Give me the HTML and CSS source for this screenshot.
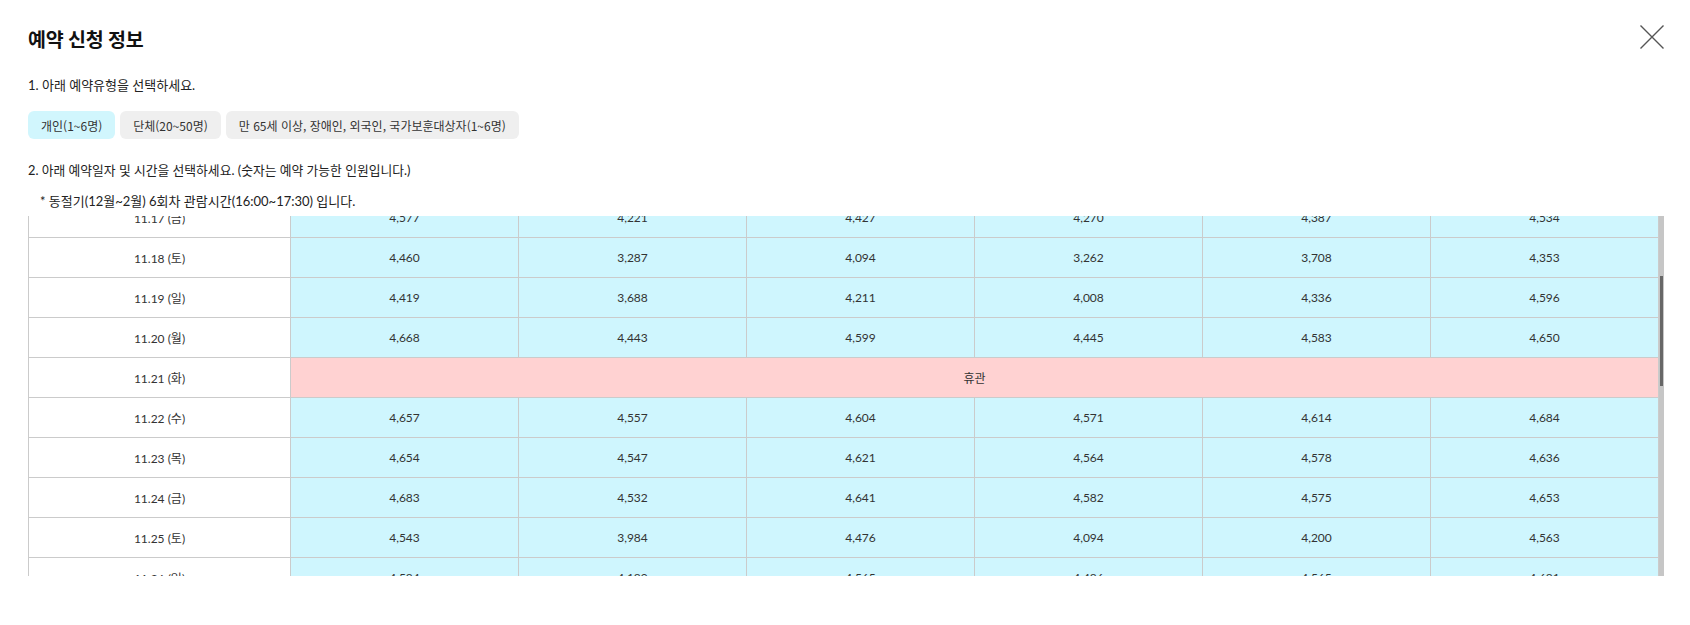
FILE: index.html
```html
<!DOCTYPE html>
<html lang="ko">
<head>
<meta charset="utf-8">
<title>예약 신청 정보</title>
<link rel="stylesheet" href="styles.css">
</head>
<body>
<div class="modal">
  <h2 class="title">예약 신청 정보</h2>
  <button class="close" aria-label="닫기">
    <svg width="24" height="24" viewBox="0 0 24 24"><path d="M0.5 0.5 L23.5 23.5 M23.5 0.5 L0.5 23.5" stroke="#555" stroke-width="1.4" fill="none"/></svg>
  </button>
  <p class="step step1">1. 아래 예약유형을 선택하세요.</p>
  <div class="types">
    <button class="type active">개인(1~6명)</button>
    <button class="type">단체(20~50명)</button>
    <button class="type">만 65세 이상, 장애인, 외국인, 국가보훈대상자(1~6명)</button>
  </div>
  <p class="step step2">2. 아래 예약일자 및 시간을 선택하세요. (숫자는 예약 가능한 인원입니다.)</p>
  <p class="note">* 동절기(12월~2월) 6회차 관람시간(16:00~17:30) 입니다.</p>
  <div class="scroll-wrap">
    <div class="scroll" id="scroll">
      <table class="sched">
        <colgroup><col class="c-date"><col><col><col><col><col><col></colgroup>
        <thead>
          <tr><th>날짜</th><th>1회차<br>(09:30~11:00)</th><th>2회차<br>(10:30~12:00)</th><th>3회차<br>(12:00~13:30)</th><th>4회차<br>(13:30~15:00)</th><th>5회차<br>(14:30~16:00)</th><th>6회차<br>(16:00~17:30)</th></tr>
        </thead>
        <tbody>
          <tr><td class="d">11.14 (화)</td><td class="closed" colspan="6">휴관</td></tr>
          <tr><td class="d">11.15 (수)</td><td>4,612</td><td>4,498</td><td>4,587</td><td>4,533</td><td>4,601</td><td>4,672</td></tr>
          <tr><td class="d">11.16 (목)</td><td>4,640</td><td>4,512</td><td>4,603</td><td>4,556</td><td>4,590</td><td>4,661</td></tr>
          <tr><td class="d">11.17 (금)</td><td>4,577</td><td>4,221</td><td>4,427</td><td>4,270</td><td>4,387</td><td>4,534</td></tr>
          <tr><td class="d">11.18 (토)</td><td>4,460</td><td>3,287</td><td>4,094</td><td>3,262</td><td>3,708</td><td>4,353</td></tr>
          <tr><td class="d">11.19 (일)</td><td>4,419</td><td>3,688</td><td>4,211</td><td>4,008</td><td>4,336</td><td>4,596</td></tr>
          <tr><td class="d">11.20 (월)</td><td>4,668</td><td>4,443</td><td>4,599</td><td>4,445</td><td>4,583</td><td>4,650</td></tr>
          <tr><td class="d">11.21 (화)</td><td class="closed" colspan="6">휴관</td></tr>
          <tr><td class="d">11.22 (수)</td><td>4,657</td><td>4,557</td><td>4,604</td><td>4,571</td><td>4,614</td><td>4,684</td></tr>
          <tr><td class="d">11.23 (목)</td><td>4,654</td><td>4,547</td><td>4,621</td><td>4,564</td><td>4,578</td><td>4,636</td></tr>
          <tr><td class="d">11.24 (금)</td><td>4,683</td><td>4,532</td><td>4,641</td><td>4,582</td><td>4,575</td><td>4,653</td></tr>
          <tr><td class="d">11.25 (토)</td><td>4,543</td><td>3,984</td><td>4,476</td><td>4,094</td><td>4,200</td><td>4,563</td></tr>
          <tr><td class="d">11.26 (일)</td><td>4,584</td><td>4,189</td><td>4,565</td><td>4,486</td><td>4,565</td><td>4,681</td></tr>
          <tr><td class="d">11.27 (월)</td><td>4,690</td><td>4,611</td><td>4,652</td><td>4,598</td><td>4,627</td><td>4,688</td></tr>
          <tr><td class="d">11.28 (화)</td><td class="closed" colspan="6">휴관</td></tr>
          <tr><td class="d">11.29 (수)</td><td>4,695</td><td>4,640</td><td>4,668</td><td>4,633</td><td>4,651</td><td>4,697</td></tr>
          <tr><td class="d">11.30 (목)</td><td>4,692</td><td>4,628</td><td>4,659</td><td>4,617</td><td>4,644</td><td>4,693</td></tr>
          <tr><td class="d">12.01 (금)</td><td>4,688</td><td>4,602</td><td>4,647</td><td>4,611</td><td>4,629</td><td>4,690</td></tr>
          <tr><td class="d">12.02 (토)</td><td>4,611</td><td>4,205</td><td>4,538</td><td>4,317</td><td>4,402</td><td>4,620</td></tr>
          <tr><td class="d">12.03 (일)</td><td>4,633</td><td>4,398</td><td>4,590</td><td>4,512</td><td>4,571</td><td>4,664</td></tr>
          <tr><td class="d">12.04 (월)</td><td>4,697</td><td>4,655</td><td>4,680</td><td>4,649</td><td>4,662</td><td>4,698</td></tr>
          <tr><td class="d">12.05 (화)</td><td class="closed" colspan="6">휴관</td></tr>
          <tr><td class="d">12.06 (수)</td><td>4,699</td><td>4,670</td><td>4,684</td><td>4,661</td><td>4,677</td><td>4,700</td></tr>
          <tr><td class="d">12.07 (목)</td><td>4,698</td><td>4,666</td><td>4,681</td><td>4,659</td><td>4,672</td><td>4,699</td></tr>
          <tr><td class="d">12.08 (금)</td><td>4,696</td><td>4,651</td><td>4,674</td><td>4,647</td><td>4,668</td><td>4,698</td></tr>
          <tr><td class="d">12.09 (토)</td><td>4,662</td><td>4,419</td><td>4,603</td><td>4,488</td><td>4,555</td><td>4,671</td></tr>
          <tr><td class="d">12.10 (일)</td><td>4,675</td><td>4,527</td><td>4,633</td><td>4,581</td><td>4,618</td><td>4,684</td></tr>
          <tr><td class="d">12.11 (월)</td><td>4,700</td><td>4,681</td><td>4,692</td><td>4,677</td><td>4,688</td><td>4,700</td></tr>
        </tbody>
      </table>
    </div>
    <div class="track"><div class="thumb"></div></div>
  </div>
</div>
<script src="script.js"></script>
</body>
</html>
```
FILE: styles.css
```css
* { box-sizing: border-box; }
html, body { margin: 0; background: #fff; }
body {
  font-family: Lato, "Noto Sans CJK KR", sans-serif;
  color: #222;
}
.modal {
  position: relative;
  padding: 27px 26px 0 28px;
}
.title {
  margin: 0;
  font-size: 19.5px;
  line-height: 26px;
  font-weight: 700;
  color: #111;
  letter-spacing: -0.2px;
}
.close {
  position: absolute;
  top: 25px;
  right: 26px;
  width: 24px;
  height: 24px;
  padding: 0;
  border: 0;
  background: none;
  cursor: pointer;
}
.close svg { display: block; }
.step {
  margin: 23px 0 0;
  font-size: 13px;
  line-height: 18px;
  color: #222;
}
.step2 { margin-top: 22px; font-size: 12.8px; }
.note {
  margin: 13px 0 0;
  padding-left: 12px;
  font-size: 13px;
  line-height: 18px;
  color: #222;
}
.types {
  display: flex;
  gap: 5px;
  margin-top: 17px;
}
.type {
  height: 28px;
  padding: 0 13px;
  border: 0;
  border-radius: 6px;
  background: #efefef;
  font-family: "Noto Sans CJK KR", Lato, sans-serif;
  font-size: 12px;
  color: #333;
}
.type.active { background: #d1f6fd; }
.scroll-wrap {
  display: flex;
  margin-top: 6px;
  height: 360px;
}
.scroll {
  flex: 1;
  min-width: 0;
  overflow-y: auto;
  scrollbar-width: none;
}
.scroll::-webkit-scrollbar { display: none; }
.track {
  position: relative;
  flex: 0 0 5px;
  background: #c6c6c6;
}
.thumb {
  position: absolute;
  left: 1px;
  width: 3px;
  top: 60px;
  height: 110px;
  background: #676767;
}
.sched {
  width: 100%;
  table-layout: fixed;
  border-collapse: collapse;
  font-size: 12px;
  color: #333;
}
.c-date { width: 262px; }
.sched th, .sched td {
  border: 1px solid #cbcbcb;
  text-align: center;
  padding: 0;
}
.sched th {
  height: 57px;
  background: #f5f5f5;
  font-weight: 400;
  line-height: 18px;
}
.sched td {
  height: 40px;
  background: #cff6fe;
}
.sched td.d { background: #fff; }
.sched td.closed { background: #ffd2d2; }
```
FILE: script.js
```js
document.getElementById('scroll').scrollTop = 196;
```
